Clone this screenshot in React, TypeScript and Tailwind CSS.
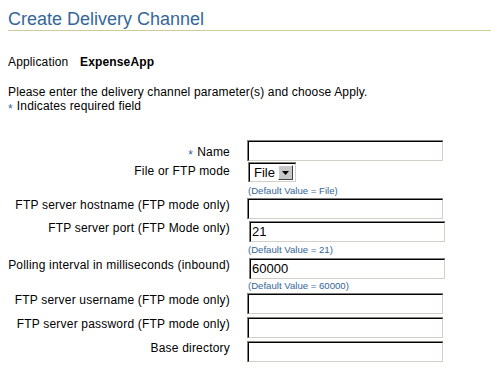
import React from "react";

const BLUE = "text-[#336699]";

function TextBox({ value = "", shift = false }: { value?: string; shift?: boolean }) {
  return (
    <div className={`w-[196px] h-[21px] border-t border-l border-[#808080] ${shift ? "ml-[2px]" : ""}`}>
      <div className="w-full h-full border-t border-l border-black border-b border-r border-b-[#d4d0c8] border-r-[#d4d0c8] bg-white">
        <input
          readOnly
          defaultValue={value}
          className="block w-full h-[18px] border-0 outline-none bg-transparent p-0 pl-[1px] text-[13px] leading-[18px] text-black font-['Liberation_Sans',Arial,sans-serif]"
        />
      </div>
    </div>
  );
}

function SelectBox() {
  return (
    <div className="ml-[1px] w-[48px] h-[20px] border-t border-l border-[#808080]">
      <div className="w-full h-full flex items-center border-t border-l border-black border-b border-r border-b-[#d4d0c8] border-r-[#d4d0c8] bg-white">
        <span className="pl-[4px] text-[13px] leading-[17px] text-black flex-1">File</span>
        <div className="mr-[2px] w-[15px] h-[15px] bg-[#c8c8c8] border-t border-l border-white border-b border-r border-b-[#404040] border-r-[#404040] flex items-center justify-center">
          <svg width="7" height="4" viewBox="0 0 7 4">
            <path d="M0 0 H7 L3.5 4 Z" fill="#000" />
          </svg>
        </div>
      </div>
    </div>
  );
}

function Row({
  label,
  required = false,
  labelPt = "pt-0",
  mt = "",
  children,
}: {
  label: string;
  required?: boolean;
  labelPt?: string;
  mt?: string;
  children: React.ReactNode;
}) {
  return (
    <div className={`flex ${mt}`}>
      <div className={`w-[222px] text-right text-[12px] leading-[14px] tracking-[0.2px] text-black whitespace-nowrap ${labelPt}`}>
        {required && <span className={`${BLUE} inline-block translate-y-[3px] mr-[4px]`}>*</span>}
        {label}
      </div>
      <div className="ml-[17px]">{children}</div>
    </div>
  );
}

function DefaultNote({ text, mt = "" }: { text: string; mt?: string }) {
  return (
    <div className={`flex ${mt}`}>
      <div className="w-[222px]" />
      <div className={`ml-[18px] text-[9.6px] leading-[13px] ${BLUE}`}>{text}</div>
    </div>
  );
}

export default function App() {
  return (
    <div className="w-[491px] h-[375px] bg-white overflow-hidden font-['Liberation_Sans',Arial,sans-serif] text-black">
      <div className="pl-[8px]">
        <div className={`pt-[9px] text-[18px] leading-[21px] ${BLUE} border-b border-[#cccc99]`}>
          Create Delivery Channel
        </div>

        <div className="mt-[24px] flex text-[12px] leading-[14px] tracking-[0.15px]">
          <span className="w-[72px]">Application</span>
          <span className="font-bold">ExpenseApp</span>
        </div>

        <div className="mt-[16px] text-[12px] leading-[14px] tracking-[0.15px]">
          Please enter the delivery channel parameter(s) and choose Apply.
        </div>
        <div className="text-[12px] leading-[14px] tracking-[0.15px]">
          <span className={`${BLUE} inline-block translate-y-[3px] mr-[4px]`}>*</span>
          Indicates required field
        </div>
      </div>

      <div className="pl-[8px] mt-[27px] flex flex-col">
        <Row label="Name" required labelPt="pt-[5px]">
          <TextBox />
        </Row>
        <Row label="File or FTP mode" labelPt="pt-[2px]" mt="mt-[1px]">
          <SelectBox />
        </Row>
        <DefaultNote text="(Default Value = File)" mt="mt-[2px]" />
        <Row label="FTP server hostname (FTP mode only)" labelPt="pt-0" mt="mt-[1px]">
          <TextBox />
        </Row>
        <Row label="FTP server port (FTP Mode only)" mt="mt-[2px]">
          <TextBox value="21" shift />
        </Row>
        <DefaultNote text="(Default Value = 21)" mt="mt-[1px]" />
        <Row label="Polling interval in milliseconds (inbound)" mt="mt-[2px]">
          <TextBox value="60000" shift />
        </Row>
        <DefaultNote text="(Default Value = 60000)" />
        <Row label="FTP server username (FTP mode only)" mt="mt-[1px]">
          <TextBox />
        </Row>
        <Row label="FTP server password (FTP mode only)" mt="mt-[3px]">
          <TextBox />
        </Row>
        <Row label="Base directory" mt="mt-[3px]">
          <TextBox />
        </Row>
      </div>
    </div>
  );
}
